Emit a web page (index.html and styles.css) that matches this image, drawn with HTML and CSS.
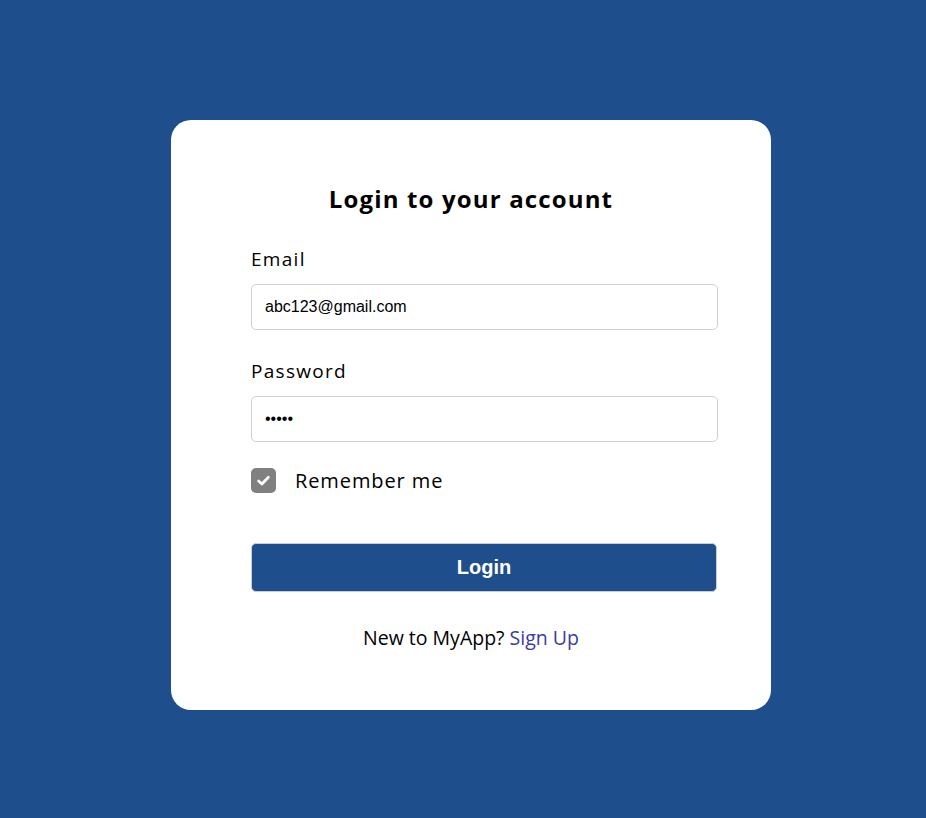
FILE: index.html
```html
<!DOCTYPE html>
<html lang="en">
<head>
<meta charset="utf-8">
<title>Login</title>
<link rel="stylesheet" href="styles.css">
</head>
<body>
<main class="page">
  <form class="card">
    <h1 class="title">Login to your account</h1>
    <label class="label" for="email">Email</label>
    <input class="field" id="email" type="text" value="abc123@gmail.com">
    <label class="label" for="pw">Password</label>
    <input class="field" id="pw" type="password" value="abcde">
    <div class="remember">
      <span class="check">
        <svg viewBox="0 0 16 16" width="17" height="17"><path d="M3.4 8.4 L6.5 11.3 L12.6 5" fill="none" stroke="#fff" stroke-width="2.6" stroke-linecap="round" stroke-linejoin="round"/></svg>
      </span>
      <span class="remember-text">Remember me</span>
    </div>
    <button class="btn" type="button">Login</button>
    <p class="signup">New to MyApp? <a class="signup-link" href="#">Sign Up</a></p>
  </form>
</main>
</body>
</html>
```
FILE: styles.css
```css
html, body {
  margin: 0;
  padding: 0;
  background: #1f4e8c;
}
.page {
  display: flex;
  justify-content: center;
  padding-top: 120px;
  height: 818px;
  box-sizing: border-box;
}
.card {
  width: 600px;
  height: 590px;
  box-sizing: border-box;
  background: #fff;
  border-radius: 20px;
  padding: 64px 80px 0 80px;
  display: flex;
  flex-direction: column;
  font-family: "Open Sans", sans-serif;
  margin-left: 16px;
}
.title {
  margin: 0 0 32px 0;
  text-align: center;
  font-size: 24px;
  font-weight: 700;
  color: #000;
  line-height: 30px;
  letter-spacing: 1.15px;
}
.label {
  font-size: 19px;
  font-weight: 500;
  color: #000;
  line-height: 26px;
  margin-bottom: 12px;
  letter-spacing: 1.3px;
}
.field {
  width: 467px;
  height: 46px;
  box-sizing: border-box;
  border: 1px solid #d0d0d0;
  border-radius: 5px;
  padding: 0 13px;
  font-family: "Liberation Sans", Arial, sans-serif;
  font-size: 16px;
  color: #000;
  margin: 0 0 28px 0;
  outline: none;
}
#pw {
  margin-bottom: 26px;
}
.remember {
  display: flex;
  align-items: center;
  gap: 19px;
  height: 25px;
  margin-bottom: 51px;
}
.check {
  width: 25px;
  height: 25px;
  background: #808080;
  border-radius: 5px;
  display: flex;
  align-items: center;
  justify-content: center;
}
.remember-text {
  font-size: 20px;
  color: #000;
  letter-spacing: 0.9px;
}
.btn {
  width: 466px;
  height: 49px;
  background: #1f4e8c;
  border: 1px solid #c8ccd4;
  border-radius: 5px;
  color: #fff;
  font-family: "Liberation Sans", Arial, sans-serif;
  font-weight: 700;
  font-size: 20px;
  padding: 0;
  margin: -1px 0 33px 0;
}
.signup {
  margin: 0;
  text-align: center;
  font-size: 19.5px;
  color: #000;
  line-height: 26px;
}
.signup-link {
  color: #3b3ba5;
  text-decoration: none;
}
```
